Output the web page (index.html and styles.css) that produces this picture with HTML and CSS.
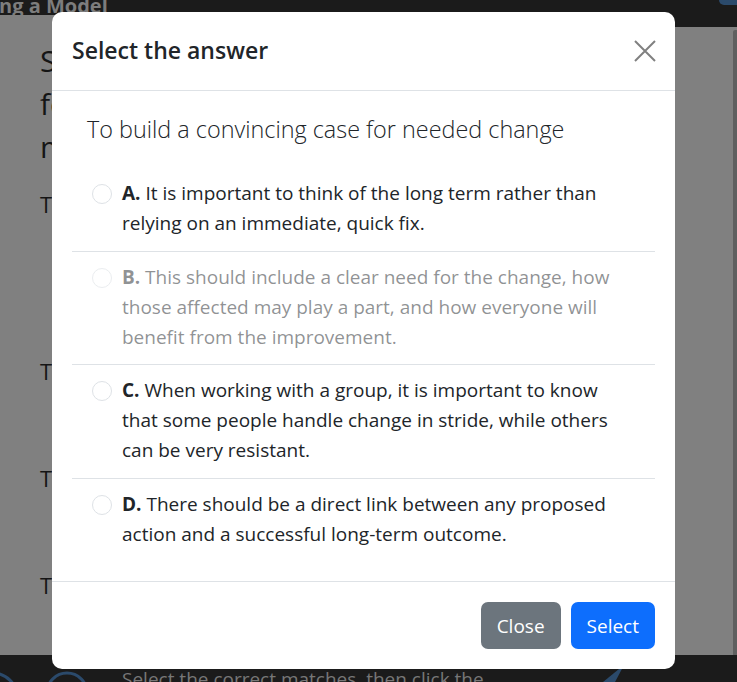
FILE: index.html
```html
<!DOCTYPE html>
<html>
<head>
	<meta charset="utf-8">
	<meta name="viewport" content="width=device-width, initial-scale=1">
	<title>Select the answer</title>
	<link rel="stylesheet" href="styles.css">
</head>
<body>
	<div class="page">
		<div class="topbar">
			<div class="topbar-title"><span>ng a Model</span></div>
			<div class="topbar-tools"><div class="tool-btn"></div></div>
		</div>

		<div class="main">
			<div class="content">
				<h2 class="lesson-title">Select the best match<br>for each step of<br>making a change</h2>
				<p class="statement first">To build a convincing case for needed change</p>
				<p class="statement">To gain support from those affected</p>
				<p class="statement">To plan the next steps</p>
				<p class="statement">To measure the results</p>
			</div>
			<div class="scrollbar"></div>
		</div>

		<div class="bottombar">
			<svg class="bottom-rings" width="122" height="27" viewBox="0 0 122 27">
				<circle cx="-8" cy="44" r="26" fill="none" stroke="#2b4a6b" stroke-width="3"/>
				<circle cx="67" cy="38" r="20" fill="none" stroke="#2b4a6b" stroke-width="3"/>
			</svg>
			<span class="bottom-text">Select the correct matches, then click the</span>
			<svg class="bottom-slash" width="30" height="27" viewBox="0 0 30 27">
				<polygon points="6,27 22,14 26,12 18,27" fill="#2b4a6b"/>
			</svg>
		</div>
	</div>

	<div class="modal">
		<div class="modal-header">
			<h5 class="modal-title">Select the answer</h5>
			<button class="btn-close" type="button">
				<svg width="22" height="22" viewBox="0 0 22 22">
					<path d="M1 1 L21 21 M21 1 L1 21" stroke="#808080" stroke-width="2" fill="none"/>
				</svg>
			</button>
		</div>

		<div class="modal-body">
			<p class="question">To build a convincing case for needed change</p>
			<div class="options">
				<label class="option">
					<span class="radio"></span>
					<span class="option-text"><b>A.</b> It is important to think of the long term rather than relying on an immediate, quick fix.</span>
				</label>
				<label class="option disabled">
					<span class="radio"></span>
					<span class="option-text"><b>B.</b> This should include a clear need for the change, how those affected may play a part, and how everyone will benefit from the improvement.</span>
				</label>
				<label class="option">
					<span class="radio"></span>
					<span class="option-text"><b>C.</b> When working with a group, it is important to know that some people handle change in stride, while others can be very resistant.</span>
				</label>
				<label class="option">
					<span class="radio"></span>
					<span class="option-text"><b>D.</b> There should be a direct link between any proposed action and a successful long-term outcome.</span>
				</label>
			</div>
		</div>

		<div class="modal-footer">
			<button class="btn btn-secondary" type="button">Close</button>
			<button class="btn btn-primary" type="button">Select</button>
		</div>
	</div>
</body>
</html>
```

FILE: styles.css
```css
* {
	box-sizing: border-box;
}

body {
	margin: 0;
	background: #808080;
	font-family: "Open Sans", "Noto Sans", sans-serif;
	overflow: hidden;
}

.page {
	display: flex;
	flex-direction: column;
	height: 682px;
}

.topbar {
	display: flex;
	align-items: flex-start;
	height: 27px;
	flex-shrink: 0;
}

.topbar-title {
	flex: 1;
	height: 15px;
	overflow: hidden;
	background: #1b1b1b;
}

.topbar-title span {
	display: block;
	margin-top: -6px;
	margin-left: -1px;
	font-size: 20px;
	line-height: 24px;
	font-weight: 700;
	color: #7d7d7d;
}

.topbar-tools {
	display: flex;
	justify-content: flex-end;
	width: 90px;
	height: 27px;
	background: #1b1b1b;
}

.tool-btn {
	width: 18px;
	height: 5px;
	background: #2b4a6b;
	border-radius: 0 0 0 5px;
}

.main {
	display: flex;
	flex: 1;
	min-height: 0;
}

.content {
	flex: 1;
	padding-left: 40px;
	color: #151515;
	white-space: nowrap;
	overflow: hidden;
}

.lesson-title {
	margin: 12px 0 20px;
	font-size: 30px;
	line-height: 43px;
	font-weight: 400;
}

.statement {
	margin: 0 0 74px;
	font-size: 22px;
	line-height: 33px;
}

.statement.first {
	margin-bottom: 134px;
}

.scrollbar {
	width: 4px;
	margin-top: 3px;
	background: #5f5f5f;
	border-radius: 2px 0 0 0;
}

.bottombar {
	display: flex;
	align-items: flex-start;
	height: 27px;
	flex-shrink: 0;
	background: #1b1b1b;
	overflow: hidden;
}

.bottom-text {
	padding-top: 11px;
	font-size: 19px;
	line-height: 26px;
	color: #777;
}

.bottom-slash {
	margin-left: auto;
	margin-right: 110px;
}

/* modal */
.modal {
	position: absolute;
	top: 12px;
	left: 52px;
	width: 623px;
	background: #fff;
	border-radius: 10px;
	color: #212529;
}

.modal-header {
	display: flex;
	align-items: center;
	justify-content: space-between;
	padding: 20px;
	border-bottom: 1px solid #dee2e6;
}

.modal-title {
	margin: 0;
	font-size: 23px;
	line-height: 37.5px;
	font-weight: 600;
}

.btn-close {
	display: flex;
	padding: 0;
	margin-right: -1px;
	border: none;
	background: none;
}

.modal-body {
	padding: 20px;
}

.question {
	margin: 0 0 20px;
	padding-left: 15px;
	font-size: 23.4px;
	line-height: 37.5px;
	font-weight: 300;
}

.option {
	display: flex;
	gap: 10px;
	padding: 10px 24px 12.5px 20px;
	border-bottom: 1px solid #dee2e6;
	font-size: 19px;
	line-height: 30px;
}

.option:last-child {
	border-bottom: none;
}

.option b {
	font-weight: 700;
}

.radio {
	flex-shrink: 0;
	width: 20px;
	height: 20px;
	margin-top: 6px;
	border: 1px solid #dee2e6;
	border-radius: 50%;
	background: #fff;
}

.option.disabled {
	color: rgba(33, 37, 41, 0.5);
}

.option.disabled .radio {
	opacity: 0.6;
}

.modal-footer {
	display: flex;
	justify-content: flex-end;
	padding: 15px;
	border-top: 1px solid #dee2e6;
}

.btn {
	margin: 5px;
	padding: 7.5px 15px;
	font-family: inherit;
	font-size: 19px;
	line-height: 30px;
	color: #fff;
	border: 1px solid transparent;
	border-radius: 7px;
}

.btn-secondary {
	background: #6c757d;
}

.btn-primary {
	background: #0d6efd;
}
```
